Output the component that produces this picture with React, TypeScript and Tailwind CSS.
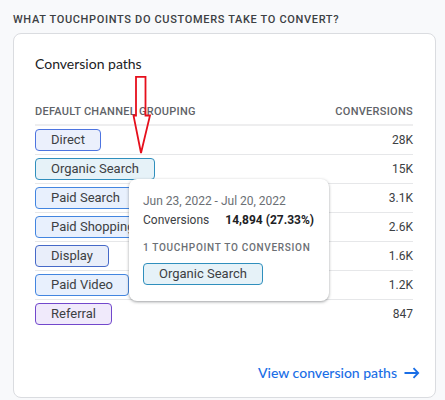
type Channel = { name: string; value: string; chip: string };

const channels: Channel[] = [
  { name: "Direct", value: "28K", chip: "border-[#4d74e0] bg-[#ebf0fc]" },
  { name: "Organic Search", value: "15K", chip: "border-[#2f8fbd] bg-[#e6f2f8]" },
  { name: "Paid Search", value: "3.1K", chip: "border-[#4285e0] bg-[#e8f0fd]" },
  { name: "Paid Shopping", value: "2.6K", chip: "border-[#4285e0] bg-[#e8f0fd]" },
  { name: "Display", value: "1.6K", chip: "border-[#4669c8] bg-[#e9eefa]" },
  { name: "Paid Video", value: "1.2K", chip: "border-[#4285e0] bg-[#e8f0fd]" },
  { name: "Referral", value: "847", chip: "border-[#7248cc] bg-[#f0eafb]" },
];

function Chip({ name, className }: { name: string; className: string }) {
  return (
    <span
      className={`inline-flex h-[22px] items-center rounded-[4px] border px-[15px] text-[13px] leading-5 whitespace-nowrap text-[#3c4043] ${className}`}
    >
      {name}
    </span>
  );
}

function PathTooltip() {
  return (
    <div
      role="tooltip"
      className="absolute top-[75px] left-[94px] flex w-[200px] flex-col items-start rounded-[8px] bg-white pt-[14px] pr-[15px] pb-4 pl-[14px] shadow-[0_1px_3px_rgba(60,64,67,0.5)]"
    >
      <p className="text-[12px] leading-4 text-[#6b6f74]">Jun 23, 2022 - Jul 20, 2022</p>
      <p className="mt-[3px] flex w-full justify-between text-[12px] leading-4 text-[#3c4043]">
        <span>Conversions</span>
        <span className="font-bold text-[#202124]">14,894 (27.33%)</span>
      </p>
      <p className="mt-3 text-[10px] leading-4 font-medium tracking-[0.07em] whitespace-nowrap text-[#6b6f74]">
        1 TOUCHPOINT TO CONVERSION
      </p>
      <div className="mt-[7px] flex">
        <Chip name="Organic Search" className="border-[#2f8fbd] bg-[#e6f2f8]" />
      </div>
    </div>
  );
}

function PointerArrow() {
  return (
    <svg
      aria-hidden="true"
      className="pointer-events-none absolute -top-7 left-[97px]"
      width="20"
      height="80"
      viewBox="0 0 20 80"
      fill="none"
      stroke="#e60f1c"
      strokeWidth="1.8"
    >
      <path d="M4 0.9H13.5V39.5H18L9 77L1.5 39.5H4Z" />
    </svg>
  );
}

export default function App() {
  return (
    <main className="min-h-screen bg-[#f8f9fb] pt-[13px] pr-[9px] pb-[2px] pl-[13px] font-['Roboto',sans-serif]">
      <h1 className="text-[11px] leading-[14px] font-medium tracking-[0.06em] whitespace-nowrap text-[#3c4043]">
        WHAT TOUCHPOINTS DO CUSTOMERS TAKE TO CONVERT?
      </h1>
      <section className="mt-[6px] rounded-[8px] border border-[#dadce0] bg-white pt-5 pr-[22px] pb-[14px] pl-[21px]">
        <h2 className="font-['Lato',sans-serif] text-[14px] leading-5 text-[#202124]">
          Conversion paths
        </h2>
        <div className="relative mt-[30px]">
          <table className="w-full border-collapse text-[#3c4043]">
            <thead>
              <tr className="h-[21px] border-b-2 border-[#eeeeef] text-[11px] leading-[16px] text-[#5f6368]">
                <th className="p-0 text-left align-top font-medium tracking-wide whitespace-nowrap">
                  DEFAULT CHANNEL GROUPING
                </th>
                <th className="p-0 text-right align-top font-medium tracking-wide">CONVERSIONS</th>
              </tr>
            </thead>
            <tbody>
              {channels.map((c) => (
                <tr key={c.name} className="h-[29px] border-b border-[#e6e7e9] last:border-b-0">
                  <td className="p-0">
                    <div className="flex">
                      <Chip name={c.name} className={c.chip} />
                    </div>
                  </td>
                  <td className="p-0 text-right text-[12px] leading-4">{c.value}</td>
                </tr>
              ))}
            </tbody>
          </table>
          <PathTooltip />
          <PointerArrow />
        </div>
        <div className="mt-[35px] -mr-[7px] flex justify-end">
          <a
            href="#conversion-paths"
            className="flex items-center gap-[7px] font-['Lato',sans-serif] text-[14px] leading-5 font-medium text-[#1a6ee6]"
          >
            View conversion paths
            <svg
              aria-hidden="true"
              width="16"
              height="12"
              viewBox="0 0 16 12"
              fill="none"
              stroke="currentColor"
              strokeWidth="1.8"
            >
              <path d="M0.5 6H14M9.5 1.2L14.2 6L9.5 10.8" />
            </svg>
          </a>
        </div>
      </section>
    </main>
  );
}
